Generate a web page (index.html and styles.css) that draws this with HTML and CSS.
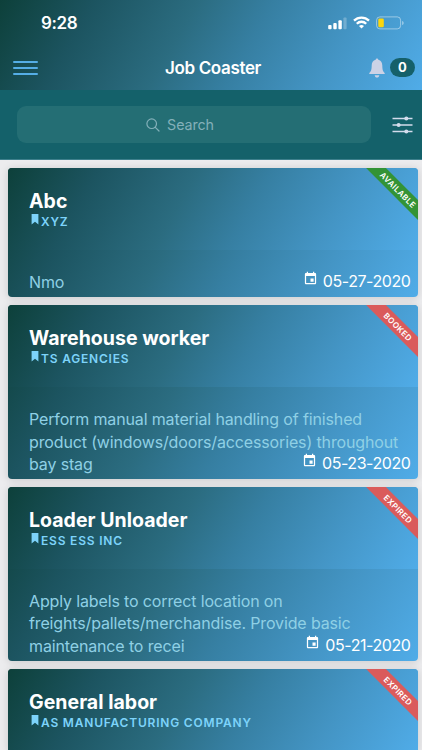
FILE: index.html
```html
<!DOCTYPE html>
<html lang="en">

<head>
  <meta charset="UTF-8" />
  <meta name="viewport" content="width=device-width, initial-scale=1.0" />
  <title>Job Coaster</title>
  <link rel="stylesheet" href="styles.css">
</head>

<body>
  <!-- shared icons -->
  <svg class="sprite">
    <symbol id="bookmark" viewBox="0 0 8 11">
      <path d="M.6 0h6.800v10.600L4 7.800.6 10.600z" fill="currentColor" />
    </symbol>
    <symbol id="calendar" viewBox="0 0 24 24">
      <path fill="currentColor" d="M17 12h-5v5h5v-5zM16 1v2H8V1H6v2H5c-1.100 0-2 .9-2 2v14c0 1.100.9 2 2 2h14c1.100 0 2-.9 2-2V5c0-1.100-.9-2-2-2h-1V1h-2zm3 18H5V8h14v11z" />
    </symbol>
  </svg>

  <header class="top">
    <div class="status-bar">
      <span class="time">9:28</span>
      <div class="status-icons">
        <svg width="20" height="14" viewBox="0 0 20 14" fill="#fff">
          <rect x="1.200" y="9" width="3.400" height="4.300" rx="1" />
          <rect x="6.300" y="7" width="3.400" height="6.300" rx="1" />
          <rect x="11.400" y="4.200" width="3.400" height="9.100" rx="1" />
          <rect x="16.400" y="1.500" width="3.200" height="11.800" rx="1" opacity=".25" />
        </svg>
        <svg class="wifi" width="17" height="13" viewBox="0 0 17 13" fill="none" stroke="#fff" stroke-width="2.300">
          <path d="M1 4.600a10.700 10.700 0 0 1 15 0" />
          <path d="M3.800 7.700a6.700 6.700 0 0 1 9.400 0" />
          <path d="M8.500 12.600 6 10.100a3.600 3.600 0 0 1 5 0z" fill="#fff" stroke="none" />
        </svg>
        <svg width="28" height="14" viewBox="0 0 28 14">
          <rect x=".6" y=".9" width="24" height="12" rx="3.300" fill="none" stroke="#fff" stroke-opacity=".45" />
          <rect x="2.300" y="2.500" width="5.500" height="8.800" rx="1.300" fill="#fcd60c" />
          <path d="M26.200 5v4c1-.4 1.400-1.100 1.400-2s-.4-1.600-1.400-2z" fill="#fff" opacity=".5" />
        </svg>
      </div>
    </div>
    <nav class="nav-bar">
      <button class="menu"><i></i><i></i><i></i></button>
      <h1>Job Coaster</h1>
      <div class="notifications">
        <svg width="16" height="20" viewBox="0 0 16 20" fill="#ccd2e6">
          <path d="M8 .4c-.8 0-1.300.6-1.300 1.400C4 2.500 2.700 4.700 2.700 7.500c0 4.500-.8 6-2.400 7.600v.9h15.400v-.9c-1.600-1.600-2.400-3.100-2.400-7.600 0-2.800-1.300-5-4-5.700C9.300 1 8.800.4 8 .4zM5.700 17.200c.2 1.500 1.100 2.300 2.300 2.300s2.100-.8 2.300-2.300z" />
        </svg>
        <span class="badge">0</span>
      </div>
    </nav>
  </header>

  <div class="search-bar">
    <div class="search">
      <svg width="14" height="14" viewBox="0 0 14 14" fill="none" stroke="currentColor" stroke-width="1.200" stroke-linecap="round">
        <circle cx="5.700" cy="5.700" r="4.800" />
        <path d="m9.300 9.300 3.700 3.700" />
      </svg>
      <span>Search</span>
    </div>
    <svg class="filter" width="21" height="18" viewBox="0 0 21 18" fill="#d3dcec" stroke="#d3dcec" stroke-width="1.300">
      <path d="M.5 2.500h20M.5 9h20M.5 15.500h20" />
      <g stroke="none">
        <circle cx="14.300" cy="2.500" r="2" />
        <circle cx="6.600" cy="9" r="2" />
        <circle cx="14.300" cy="15.500" r="2" />
      </g>
    </svg>
  </div>

  <main class="jobs">
    <article class="card">
      <div class="card-header">
        <h2>Abc</h2>
        <p class="company"><svg><use href="#bookmark" /></svg>XYZ</p>
      </div>
      <div class="card-body">
        <p>Nmo</p>
        <div class="date"><svg><use href="#calendar" /></svg>05-27-2020</div>
      </div>
      <span class="ribbon available">AVAILABLE</span>
    </article>

    <article class="card">
      <div class="card-header">
        <h2>Warehouse worker</h2>
        <p class="company"><svg><use href="#bookmark" /></svg>TS AGENCIES</p>
      </div>
      <div class="card-body">
        <p>Perform manual material handling of finished<br>product (windows/doors/accessories) throughout<br>bay stag</p>
        <div class="date"><svg><use href="#calendar" /></svg>05-23-2020</div>
      </div>
      <span class="ribbon">BOOKED</span>
    </article>

    <article class="card">
      <div class="card-header">
        <h2>Loader Unloader</h2>
        <p class="company"><svg><use href="#bookmark" /></svg>ESS ESS INC</p>
      </div>
      <div class="card-body">
        <p>Apply labels to correct location on<br>freights/pallets/merchandise. Provide basic<br>maintenance to recei</p>
        <div class="date"><svg><use href="#calendar" /></svg>05-21-2020</div>
      </div>
      <span class="ribbon">EXPIRED</span>
    </article>

    <article class="card">
      <div class="card-header">
        <h2>General labor</h2>
        <p class="company"><svg><use href="#bookmark" /></svg>AS MANUFACTURING COMPANY</p>
      </div>
      <span class="ribbon">EXPIRED</span>
    </article>
  </main>
</body>

</html>
```
FILE: styles.css
```css
* {
  box-sizing: border-box;
}

:root {
  --sky: linear-gradient(120deg, #0d403a 0%, #1c5460 20%, #2b6c80 42%, #367fa2 58%, #4495c5 78%, #50ace8 100%);
}

body {
  display: flex;
  flex-direction: column;
  margin: 0;
  height: 750px;
  overflow: hidden;
  background: #ececee;
  font-family: Inter, 'Liberation Sans', sans-serif;
  color: #fff;
}

h1,
h2,
p {
  margin: 0;
}

.sprite {
  display: none;
}

.top {
  flex: none;
  height: 90px;
  background: var(--sky);
}

.status-bar {
  display: flex;
  justify-content: space-between;
  align-items: center;
  height: 45px;
  padding: 0 18px 0 41px;
}

.time {
  font-size: 17px;
  font-weight: 600;
  letter-spacing: -0.4px;
}

.status-icons {
  display: flex;
  align-items: center;
  gap: 6px;
}

.nav-bar {
  display: grid;
  grid-template-columns: 1fr auto 1fr;
  align-items: center;
  height: 45px;
  padding: 0 7px 0 13px;
}

.menu {
  display: flex;
  flex-direction: column;
  gap: 4px;
  width: 25px;
  padding: 0;
  border: none;
  background: none;
}

.menu i {
  height: 2px;
  border-radius: 1px;
  background: #55aee6;
}

h1 {
  padding-right: 2px;
  font-size: 17px;
  font-weight: 600;
  line-height: 20px;
  letter-spacing: -0.35px;
}

.notifications {
  display: flex;
  justify-content: flex-end;
  align-items: center;
  gap: 5px;
}

.badge {
  width: 25px;
  height: 19px;
  border-radius: 10px;
  background: #15606a;
  font-size: 13px;
  font-weight: 700;
  line-height: 19px;
  text-align: center;
}

.search-bar {
  display: flex;
  flex: none;
  align-items: center;
  justify-content: space-between;
  height: 70px;
  padding: 0 9px 0 17px;
  background: #14616a;
  border-bottom: 1px solid #3d7f8c;
}

.search {
  display: flex;
  align-items: center;
  justify-content: center;
  gap: 7px;
  width: 354px;
  height: 37px;
  padding-right: 28px;
  border-radius: 9px;
  background: #246e74;
  color: #83b0b9;
  font-size: 14.300px;
  letter-spacing: -0.1px;
}

.jobs {
  display: flex;
  flex: 1;
  flex-direction: column;
  gap: 8px;
  min-height: 0;
  overflow: hidden;
  padding: 8px 4px 0 8px;
}

.card {
  position: relative;
  flex: none;
  overflow: hidden;
  border-radius: 4px;
  background: var(--sky);
  box-shadow: 0 1px 8px rgba(0, 0, 0, 0.15);
}

.card:last-child {
  border-radius: 4px 4px 0 0;
}

.card-header {
  height: 82px;
  padding: 21px 21px 0;
  background: var(--sky);
}

h2 {
  font-size: 19.500px;
  font-weight: 700;
  line-height: 25px;
  letter-spacing: 0.03px;
}

.company {
  display: flex;
  padding-left: 2px;
  color: #7dd3fa;
  font-size: 12px;
  font-weight: 600;
  line-height: 15px;
  letter-spacing: 0.800px;
}

.company svg {
  width: 8px;
  height: 11px;
  margin-right: 2px;
}

.card-body {
  min-height: 47px;
  padding: 21px 8px 3px 21px;
  color: #8fd0e5;
  font-size: 16px;
  line-height: 22.600px;
  letter-spacing: -0.140px;
}

.date {
  position: absolute;
  right: 7.500px;
  bottom: 4px;
  display: flex;
  gap: 5px;
  color: #fff;
  letter-spacing: -0.430px;
}

.date svg {
  width: 15px;
  height: 15px;
  margin-top: 1px;
}

.ribbon {
  position: absolute;
  top: 15px;
  right: -30px;
  width: 100px;
  height: 14px;
  background: #da5b5b;
  font-size: 8px;
  font-weight: 600;
  line-height: 14px;
  letter-spacing: 0.400px;
  text-align: center;
  transform: rotate(45deg);
}

.available {
  background: #339336;
}
```
